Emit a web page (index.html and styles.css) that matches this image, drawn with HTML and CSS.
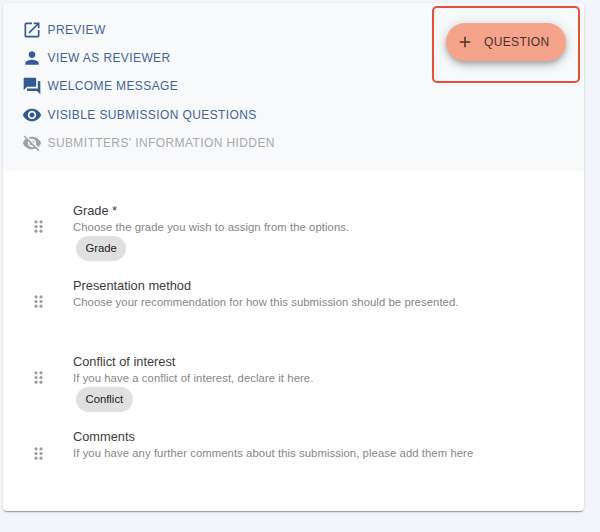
FILE: index.html
```
<!DOCTYPE html>
<html lang="en">
<head>
    <meta charset="UTF-8">
    <meta name="viewport" content="width=device-width, initial-scale=1.0">
    <title>Review form</title>
    <link rel="stylesheet" href="styles.css">
</head>
<body>
    <div class="card">
        <div class="header">
            <ul class="actions">
                <li>
                    <svg class="icon" viewBox="0 0 24 24"><path d="M19 19H5V5h7V3H5c-1.11 0-2 .9-2 2v14c0 1.1.89 2 2 2h14c1.1 0 2-.9 2-2v-7h-2v7zM14 3v2h3.59l-9.83 9.83 1.41 1.41L19 6.41V10h2V3h-7z"/></svg>
                    <span>Preview</span>
                </li>
                <li>
                    <svg class="icon" viewBox="0 0 24 24"><path d="M12 12c2.21 0 4-1.79 4-4s-1.79-4-4-4-4 1.79-4 4 1.79 4 4 4zm0 2c-2.67 0-8 1.34-8 4v2h16v-2c0-2.66-5.33-4-8-4z"/></svg>
                    <span>View as reviewer</span>
                </li>
                <li>
                    <svg class="icon" viewBox="0 0 24 24"><path d="M21 6h-2v9H6v2c0 .55.45 1 1 1h11l4 4V7c0-.55-.45-1-1-1zm-4 6V3c0-.55-.45-1-1-1H3c-.55 0-1 .45-1 1v14l4-4h10c.55 0 1-.45 1-1z"/></svg>
                    <span>Welcome message</span>
                </li>
                <li>
                    <svg class="icon" viewBox="0 0 24 24"><path d="M12 4.5C7 4.5 2.73 7.61 1 12c1.73 4.39 6 7.5 11 7.5s9.27-3.11 11-7.5c-1.73-4.39-6-7.5-11-7.5zM12 17c-2.76 0-5-2.24-5-5s2.24-5 5-5 5 2.24 5 5-2.24 5-5 5zm0-8c-1.66 0-3 1.34-3 3s1.34 3 3 3 3-1.34 3-3-1.34-3-3-3z"/></svg>
                    <span>Visible submission questions</span>
                </li>
                <li class="disabled">
                    <svg class="icon" viewBox="0 0 24 24"><path d="M12 7c2.76 0 5 2.24 5 5 0 .65-.13 1.26-.36 1.83l2.92 2.92c1.51-1.26 2.7-2.89 3.43-4.75-1.73-4.39-6-7.5-11-7.5-1.4 0-2.74.25-3.98.7l2.16 2.16C10.74 7.13 11.35 7 12 7zM2 4.27l2.28 2.28.46.46C3.08 8.3 1.78 10.02 1 12c1.73 4.39 6 7.5 11 7.5 1.55 0 3.03-.3 4.38-.84l.42.42L19.73 22 21 20.73 3.27 3 2 4.27zM7.53 9.8l1.55 1.55c-.05.21-.08.43-.08.65 0 1.66 1.34 3 3 3 .22 0 .44-.03.65-.08l1.55 1.55c-.67.33-1.41.53-2.2.53-2.76 0-5-2.24-5-5 0-.79.2-1.53.53-2.2zm4.31-.78l3.15 3.15.02-.16c0-1.66-1.34-3-3-3l-.17.01z"/></svg>
                    <span>Submitters' information hidden</span>
                </li>
            </ul>
            <div class="highlight">
                <button class="add-btn">
                    <svg viewBox="0 0 24 24"><path d="M19 13h-6v6h-2v-6H5v-2h6V5h2v6h6v2z"/></svg>
                    <span>Question</span>
                </button>
            </div>
        </div>

        <div class="questions">
            <div class="question">
                <svg class="handle" viewBox="0 0 9 13"><use href="#dots"/></svg>
                <div class="info">
                    <div class="title"><span>Grade *</span></div>
                    <div class="hint"><span>Choose the grade you wish to assign from the options.</span></div>
                    <span class="chip">Grade</span>
                </div>
            </div>
            <div class="question">
                <svg class="handle" viewBox="0 0 9 13"><use href="#dots"/></svg>
                <div class="info">
                    <div class="title"><span>Presentation method</span></div>
                    <div class="hint"><span>Choose your recommendation for how this submission should be presented.</span></div>
                </div>
            </div>
            <div class="question">
                <svg class="handle" viewBox="0 0 9 13"><use href="#dots"/></svg>
                <div class="info">
                    <div class="title"><span>Conflict of interest</span></div>
                    <div class="hint"><span>If you have a conflict of interest, declare it here.</span></div>
                    <span class="chip">Conflict</span>
                </div>
            </div>
            <div class="question">
                <svg class="handle" viewBox="0 0 9 13"><use href="#dots"/></svg>
                <div class="info">
                    <div class="title"><span>Comments</span></div>
                    <div class="hint"><span>If you have any further comments about this submission, please add them here</span></div>
                </div>
            </div>
        </div>
    </div>

    <svg width="0" height="0">
        <defs>
            <g id="dots">
                <circle cx="2" cy="1.8" r="1.6"/>
                <circle cx="7" cy="1.8" r="1.6"/>
                <circle cx="2" cy="6.5" r="1.6"/>
                <circle cx="7" cy="6.5" r="1.6"/>
                <circle cx="2" cy="11.2" r="1.6"/>
                <circle cx="7" cy="11.2" r="1.6"/>
            </g>
        </defs>
    </svg>
</body>
</html>
```

FILE: styles.css
```
* {
    box-sizing: border-box;
}
body {
    margin: 0;
    padding: 3px 16px 0 3px;
    height: 532px;
    overflow: hidden;
    background: #f4f5fa;
    font-family: "Liberation Sans", Arial, sans-serif;
}
.card {
    height: 508px;
    background: #fff;
    border-radius: 4px;
    box-shadow: 0 2px 1px -1px rgba(0, 0, 0, 0.2), 0 1px 1px rgba(0, 0, 0, 0.14), 0 1px 3px rgba(0, 0, 0, 0.12);
}

/* Header */
.header {
    display: flex;
    justify-content: space-between;
    align-items: flex-start;
    height: 167.5px;
    padding: 3px 4px 0 19px;
    background: #f8f9fb;
    border-radius: 4px 4px 0 0;
}
.actions {
    list-style: none;
    margin: 9.5px 0 0;
    padding: 0;
    color: #42649a;
    font-size: 12px;
    letter-spacing: 0.4px;
    text-transform: uppercase;
}
.actions li {
    display: flex;
    align-items: center;
    gap: 5.5px;
    height: 28.4px;
}
.actions .disabled {
    color: #a9a9a9;
}
.icon {
    width: 20px;
    height: 20px;
    fill: #325b93;
}
.disabled .icon {
    fill: #a0a0a0;
}
.highlight {
    width: 148px;
    height: 77px;
    padding: 15px 0 0 12px;
    border: 2px solid #e5503c;
    border-radius: 5px;
}
.add-btn {
    display: flex;
    align-items: center;
    gap: 10px;
    width: 120px;
    height: 38px;
    padding: 0 0 1px 10px;
    border: none;
    border-radius: 19px;
    background: #f6a38b;
    box-shadow: 0 3px 5px -1px rgba(0, 0, 0, 0.2), 0 5px 9px rgba(0, 0, 0, 0.14), 0 1px 14px rgba(0, 0, 0, 0.12);
    color: #4b302a;
    font-family: inherit;
    font-size: 12px;
    letter-spacing: 0.35px;
    text-transform: uppercase;
}
.add-btn svg {
    width: 18px;
    height: 18px;
    fill: currentColor;
}

/* Question list */
.questions {
    padding: 31px 0 0 31px;
}
.question {
    display: flex;
    height: 75.6px;
}
.handle {
    width: 9px;
    height: 13px;
    margin: 18.3px 30px 0 0;
    fill: #9b9b9b;
}
.title {
    font-size: 12.8px;
    line-height: 17px;
    color: #3c3c3c;
}
.hint {
    font-size: 11.3px;
    line-height: 16.5px;
    letter-spacing: 0.07px;
    color: #868686;
}
.chip {
    display: inline-block;
    height: 25px;
    margin: 1px 0 0 3px;
    padding: 0 9.5px;
    border-radius: 13px;
    background: #e0e0e0;
    color: #222;
    font-size: 11.3px;
    line-height: 25px;
}
```
